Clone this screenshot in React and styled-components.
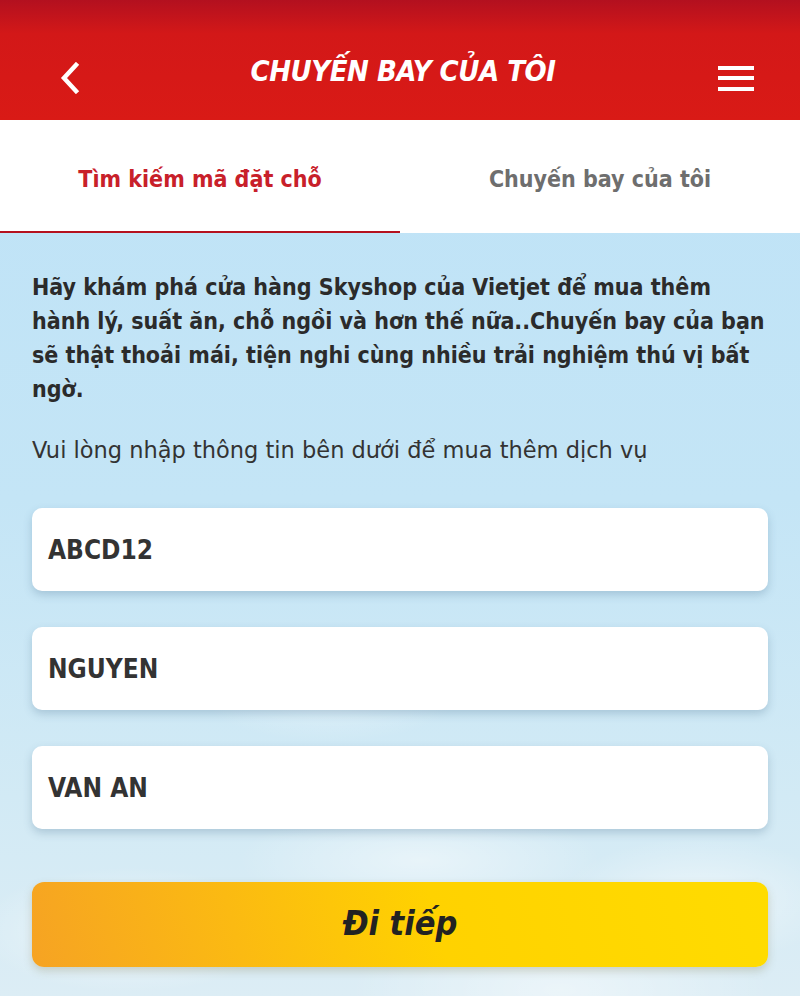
import React from "react";
import styled, { createGlobalStyle } from "styled-components";

const GlobalStyle = createGlobalStyle`
    html, body {
        margin: 0;
        padding: 0;
    }
    body {
        font-family: "DejaVu Sans Condensed", "DejaVu Sans", sans-serif;
        font-stretch: condensed;
    }
`;

const Page = styled.div`
    width: 800px;
    min-height: 996px;
    display: flex;
    flex-direction: column;
    overflow: hidden;
    background:
        radial-gradient(ellipse 220px 90px at 130px 930px, rgba(255, 255, 255, 0.55), rgba(255, 255, 255, 0) 70%),
        radial-gradient(ellipse 260px 80px at 420px 860px, rgba(255, 255, 255, 0.45), rgba(255, 255, 255, 0) 70%),
        radial-gradient(ellipse 200px 90px at 700px 900px, rgba(255, 255, 255, 0.5), rgba(255, 255, 255, 0) 70%),
        radial-gradient(ellipse 180px 60px at 330px 700px, rgba(255, 255, 255, 0.3), rgba(255, 255, 255, 0) 70%),
        radial-gradient(ellipse 300px 120px at 560px 990px, rgba(255, 255, 255, 0.45), rgba(255, 255, 255, 0) 70%),
        linear-gradient(180deg, #bde2f7 0%, #c4e5f6 50%, #d2eaf5 80%, #dcedf5 100%);
`;

const Header = styled.header`
    height: 120px;
    display: flex;
    align-items: center;
    justify-content: space-between;
    padding: 58px 46px 22px 52px;
    box-sizing: border-box;
    background: linear-gradient(180deg, #b3101f 0%, #d31818 28%, #d91a16 100%);
`;

const Title = styled.h1`
    margin: 0 0 14px;
    color: #fff;
    font-size: 29px;
    font-weight: bold;
    font-style: italic;
    letter-spacing: -0.5px;
`;

const IconButton = styled.div`
    width: 36px;
    display: flex;
    align-items: center;
    justify-content: center;
`;

const Tabs = styled.nav`
    height: 113px;
    display: flex;
    background: #fff;
`;

const Tab = styled.div`
    flex: 1;
    display: flex;
    align-items: center;
    justify-content: center;
    font-size: 23px;
    font-weight: bold;
    padding-top: 6px;
    box-sizing: border-box;
    color: ${(p) => (p.$active ? "#c8202a" : "#6e6e6e")};
    border-bottom: 2px solid ${(p) => (p.$active ? "#b5121e" : "transparent")};
`;

const Content = styled.main`
    display: flex;
    flex-direction: column;
    padding: 37px 32px 0;
`;

const Intro = styled.p`
    margin: 0;
    font-size: 23px;
    line-height: 34px;
    font-weight: bold;
    color: #2b2b2b;
`;

const Hint = styled.p`
    margin: 27px 0 0;
    font-size: 22.5px;
    line-height: 34px;
    font-stretch: normal;
    font-family: "DejaVu Sans", sans-serif;
    color: #333;
`;

const Form = styled.div`
    display: flex;
    flex-direction: column;
    gap: 36px;
    margin-top: 41px;
`;

const Field = styled.div`
    height: 83px;
    display: flex;
    align-items: center;
    padding: 0 16px;
    background: #fff;
    border-radius: 10px;
    box-shadow: 0 4px 8px rgba(60, 100, 130, 0.25);
    font-size: 26px;
    font-weight: bold;
    color: #333;
`;

const SubmitButton = styled.div`
    margin-top: 53px;
    height: 85px;
    display: flex;
    align-items: center;
    justify-content: center;
    border-radius: 12px;
    background: linear-gradient(75deg, #f6a323 0%, #fbba12 28%, #ffd200 55%, #ffdc00 100%);
    box-shadow: 0 4px 8px rgba(120, 110, 60, 0.25);
    font-size: 34px;
    font-weight: bold;
    font-style: italic;
    color: #222;
    padding-bottom: 4px;
    box-sizing: border-box;
`;

const BackIcon = () => (
    <svg width="20" height="32" viewBox="0 0 20 32">
        <path d="M16 3 L4 16 L16 29" fill="none" stroke="#fff" strokeWidth="4.5" strokeLinecap="square" />
    </svg>
);

const MenuIcon = () => (
    <svg width="36" height="28" viewBox="0 0 36 28">
        <rect x="0" y="2" width="36" height="4" fill="#fff" />
        <rect x="0" y="12" width="36" height="4" fill="#fff" />
        <rect x="0" y="23" width="36" height="4" fill="#fff" />
    </svg>
);

const fields = ["ABCD12", "NGUYEN", "VAN AN"];

export default function App() {
    return (
        <>
            <GlobalStyle />
            <Page>
                <Header>
                    <IconButton><BackIcon /></IconButton>
                    <Title>CHUYẾN BAY CỦA TÔI</Title>
                    <IconButton><MenuIcon /></IconButton>
                </Header>
                <Tabs>
                    <Tab $active>Tìm kiếm mã đặt chỗ</Tab>
                    <Tab>Chuyến bay của tôi</Tab>
                </Tabs>
                <Content>
                    <Intro>
                        Hãy khám phá cửa hàng Skyshop của Vietjet để mua thêm hành lý, suất ăn, chỗ ngồi và hơn thế nữa..Chuyến bay của bạn sẽ thật thoải mái, tiện nghi cùng nhiều trải nghiệm thú vị bất ngờ.
                    </Intro>
                    <Hint>Vui lòng nhập thông tin bên dưới để mua thêm dịch vụ</Hint>
                    <Form>
                        {fields.map((f) => (
                            <Field key={f}>{f}</Field>
                        ))}
                    </Form>
                    <SubmitButton>Đi tiếp</SubmitButton>
                </Content>
            </Page>
        </>
    );
}
